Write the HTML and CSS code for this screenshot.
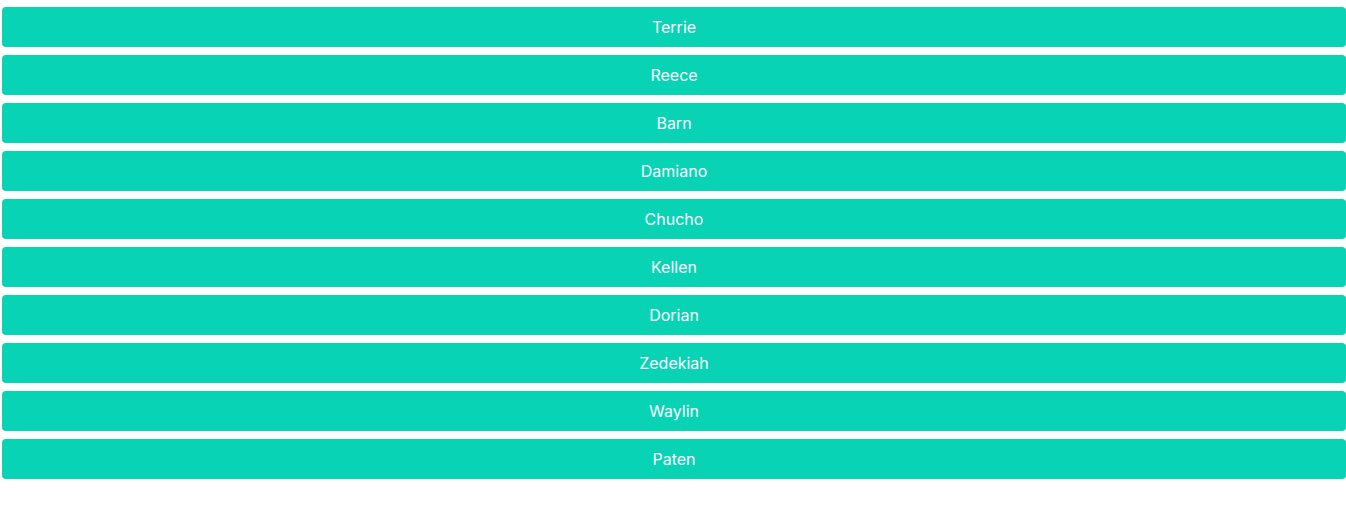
FILE: index.html
```html
<!DOCTYPE html>
<html>
<head>
<meta charset="utf-8">
<link rel="stylesheet" href="styles.css">
</head>
<body>
<div class="list">
  <div class="item">Terrie</div>
  <div class="item">Reece</div>
  <div class="item">Barn</div>
  <div class="item">Damiano</div>
  <div class="item">Chucho</div>
  <div class="item">Kellen</div>
  <div class="item">Dorian</div>
  <div class="item">Zedekiah</div>
  <div class="item">Waylin</div>
  <div class="item">Paten</div>
</div>
</body>
</html>
```
FILE: styles.css
```css
html, body {
  margin: 0;
  padding: 0;
  background: #fff;
}
.list {
  display: flex;
  flex-direction: column;
  gap: 8px;
  padding: 7px 0 0 2px;
}
.item {
  height: 40px;
  display: flex;
  align-items: center;
  justify-content: center;
  background: #08d3b4;
  color: #fff;
  border-radius: 4px;
  font-family: Inter, "Liberation Sans", sans-serif;
  font-size: 16px;
}
```
